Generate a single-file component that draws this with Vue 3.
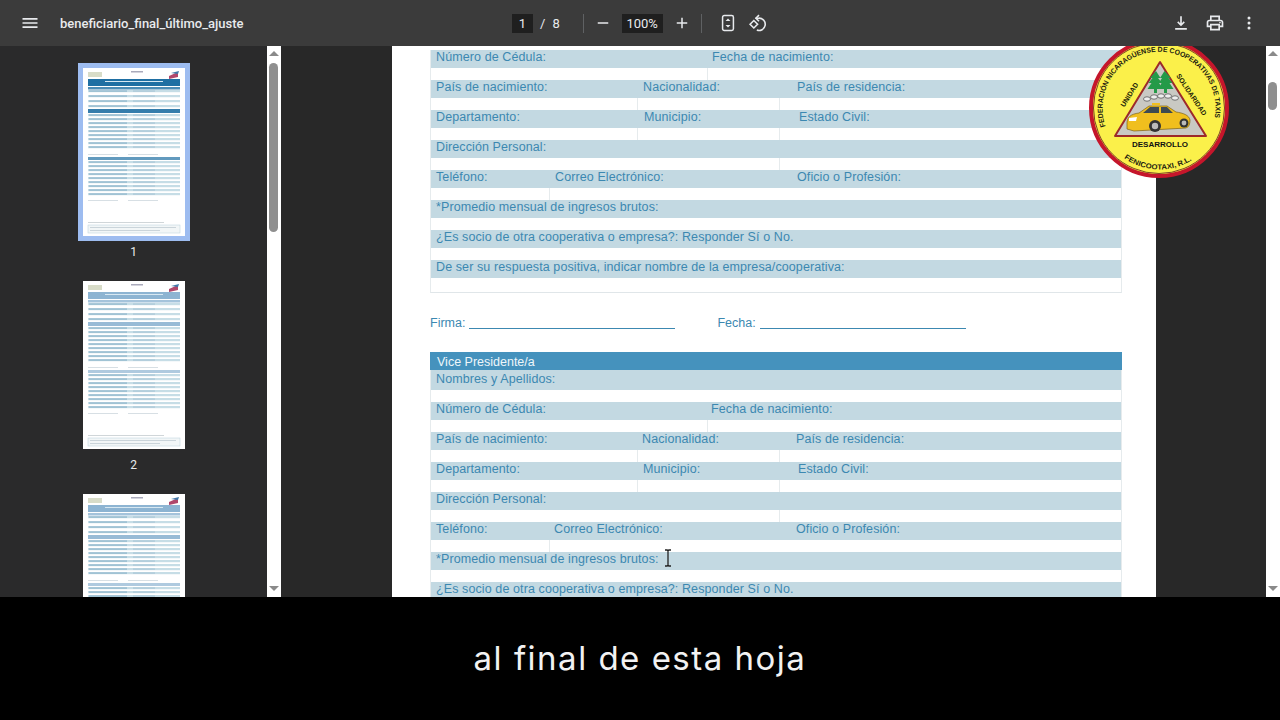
<script setup>
const forms = [
  {
    id: 'presidente',
    rows: [
      { cols: [['Número de Cédula:', 276], ['Fecha de nacimiento:', 300]], cuts: [277] },
      { cols: [['País de nacimiento:', 207], ['Nacionalidad:', 154], ['País de residencia:', 300]], cuts: [207, 142] },
      { cols: [['Departamento:', 208], ['Municipio:', 155], ['Estado Civil:', 300]], cuts: [207, 142] },
      { cols: [['Dirección Personal:', 600]], cuts: [349] },
      { cols: [['Teléfono:', 119], ['Correo Electrónico:', 242], ['Oficio o Profesión:', 300]], cuts: [119] },
      { cols: [['*Promedio mensual de ingresos brutos:', 600]], cuts: [] },
      { cols: [['¿Es socio de otra cooperativa o empresa?: Responder Sí o No.', 600]], cuts: [] },
      { cols: [['De ser su respuesta positiva, indicar nombre de la empresa/cooperativa:', 680]], cuts: [], last: true }
    ]
  },
  {
    id: 'vice',
    title: 'Vice Presidente/a',
    rows: [
      { cols: [['Nombres y Apellidos:', 600]], cuts: [], first: true },
      { cols: [['Número de Cédula:', 275], ['Fecha de nacimiento:', 300]], cuts: [277] },
      { cols: [['País de nacimiento:', 206], ['Nacionalidad:', 154], ['País de residencia:', 300]], cuts: [207, 142] },
      { cols: [['Departamento:', 207], ['Municipio:', 155], ['Estado Civil:', 300]], cuts: [207, 142] },
      { cols: [['Dirección Personal:', 600]], cuts: [349] },
      { cols: [['Teléfono:', 118], ['Correo Electrónico:', 242], ['Oficio o Profesión:', 300]], cuts: [119] },
      { cols: [['*Promedio mensual de ingresos brutos:', 600]], cuts: [] },
      { cols: [['¿Es socio de otra cooperativa o empresa?: Responder Sí o No.', 600]], cuts: [] }
    ]
  }
]

const thumbs = [
  { n: 1, selected: true, head: '#1f6fa3' },
  { n: 2, head: '#8db4d2' },
  { n: 3, head: '#8db4d2' }
]

// y positions of the tiny rows in a thumbnail, in 102x168 page units
const rowsA = [22, 27, 32, 37]
const rowsB = [46, 50, 54, 58, 62, 66, 70, 74, 78]
const rowsC = [93, 97, 101, 105, 109, 113, 117, 121, 125]
const thumbRows = [...rowsA, ...rowsB, ...rowsC]
</script>

<template>
  <div class="viewer">
    <header class="topbar">
      <div class="left">
        <svg class="ico menu" viewBox="0 0 24 24"><path d="M3 18h18v-2H3zM3 13h18v-2H3zM3 6v2h18V6z" /></svg>
        <span class="filename">beneficiario_final_último_ajuste</span>
      </div>
      <div class="center">
        <span class="page-num">1</span>
        <span class="page-total">/</span>
        <span class="page-total">8</span>
        <span class="sep sep-a"></span>
        <svg class="ico small" viewBox="0 0 24 24"><path d="M5 11h14v2H5z" /></svg>
        <span class="zoom-val">100%</span>
        <svg class="ico small" viewBox="0 0 24 24"><path d="M19 13h-6v6h-2v-6H5v-2h6V5h2v6h6z" /></svg>
        <span class="sep sep-b"></span>
        <svg class="ico" viewBox="0 0 24 24">
          <rect x="5.5" y="3" width="13" height="18" rx="2" fill="none" stroke="currentColor" stroke-width="1.8" />
          <path d="M12 6.5l3 3.2H9zM12 17.5l-3-3.2h6z" />
        </svg>
        <svg class="ico rotate" viewBox="0 0 24 24">
          <path d="M2.5 13.5L7 9l4.5 4.5L7 18z" fill="none" stroke="currentColor" stroke-width="1.9" />
          <path d="M9 6.2h4.2a7.4 7.4 0 1 1-2.6 14.3" fill="none" stroke="currentColor" stroke-width="1.9" />
          <path d="M13.2 2.5L9.5 6.2l3.7 3.7" fill="none" stroke="currentColor" stroke-width="1.9" />
        </svg>
      </div>
      <div class="right">
        <svg class="ico" viewBox="0 0 24 24"><path d="M12 16l-4.6-4.6L8.8 10l2.2 2.2V4h2v8.200l2.200-2.200 1.400 1.400zM5 20v-2h14v2z" /></svg>
        <svg class="ico" viewBox="0 0 24 24"><path d="M19 8h-1V3H6v5H5c-1.660 0-3 1.340-3 3v6h4v4h12v-4h4v-6c0-1.660-1.340-3-3-3zM8 5h8v3H8zm8 14H8v-4h8zm2-4v-2H6v2H4v-4c0-.55.45-1 1-1h14c.55 0 1 .45 1 1v4z" /><circle cx="18" cy="11.500" r="1" /></svg>
        <svg class="ico" viewBox="0 0 24 24"><circle cx="12" cy="6" r="1.800" /><circle cx="12" cy="12" r="1.800" /><circle cx="12" cy="18" r="1.800" /></svg>
      </div>
    </header>

    <div class="body">
      <aside class="sidebar">
        <div v-for="t in thumbs" :key="t.n" class="thumb-item">
          <svg class="thumb" :class="{ selected: t.selected }" viewBox="0 0 102 168">
            <rect width="102" height="168" fill="#fff" />
            <rect x="5" y="4" width="14" height="5" fill="#d8dcc8" />
            <rect x="48" y="3" width="12" height="1.500" fill="#aab" />
            <path d="M86 8l9-4v5l-9 2z" fill="#b0476b" />
            <path d="M88 5l8-2-1 3z" fill="#3f77a8" />
            <rect x="5" y="11" width="92" height="7" :fill="t.head" />
            <rect x="22" y="13" width="58" height="1" fill="#d7e8f2" />
            <rect x="5" y="19" width="92" height="2.500" :fill="t.head" opacity=".8" />
            <rect x="5" y="41" width="92" height="4" :fill="t.head" opacity=".9" />
            <rect x="5" y="89" width="92" height="3" :fill="t.head" opacity=".7" />
            <template v-for="y in thumbRows" :key="y">
              <rect x="5" :y="y" width="92" height="2.200" fill="#c6dde6" />
              <rect x="6" :y="y + 0.6" width="38" height="0.900" fill="#7aa9c2" />
              <rect x="50" :y="y + 0.6" width="22" height="0.900" fill="#9fc0d2" />
            </template>
            <rect x="5" y="86" width="30" height=".8" fill="#cdd8de" />
            <rect x="45" y="86" width="30" height=".8" fill="#cdd8de" />
            <rect x="5" y="132" width="30" height=".8" fill="#cdd8de" />
            <rect x="45" y="132" width="30" height=".8" fill="#cdd8de" />
            <rect x="5" y="154" width="76" height=".8" fill="#c5ccd0" />
            <rect x="5" y="157" width="92" height="8" fill="#f2f6f7" stroke="#b9d0da" stroke-width=".5" />
            <rect x="7" y="159" width="86" height=".8" fill="#c0ccd3" />
            <rect x="7" y="162" width="70" height=".8" fill="#c0ccd3" />
          </svg>
          <span class="thumb-label">{{ t.n }}</span>
        </div>
      </aside>
      <div class="scrollbar side-scroll">
        <span class="arrow up"></span>
        <span class="bar"></span>
        <span class="arrow down"></span>
      </div>

      <main class="stage">
        <article class="page">
          <section v-for="f in forms" :key="f.id" class="form">
            <div v-if="f.title" class="form-title">{{ f.title }}</div>
            <div v-for="(r, i) in f.rows" :key="i" class="row" :class="{ first: r.first, last: r.last }">
              <div class="labels">
                <span v-for="c in r.cols" :key="c[0]" class="label" :style="{ width: c[1] + 'px' }">{{ c[0] }}</span>
              </div>
              <div class="blanks">
                <span v-for="(w, j) in r.cuts" :key="j" class="cut" :style="{ width: w + 'px' }"></span>
              </div>
            </div>
            <div v-if="!f.title" class="sign">
              <span>Firma:</span><i class="line"></i>
              <span class="sign-date">Fecha:</span><i class="line"></i>
            </div>
          </section>
        </article>
        <svg class="cursor" viewBox="0 0 10 18">
          <path d="M2 1h2.200L5 2l.8-1H8M5 2v14M2 17h2.200L5 16l.8 1H8" fill="none" stroke="#222" stroke-width="1.300" />
        </svg>
      </main>

      <div class="scrollbar main-scroll">
        <span class="arrow up"></span>
        <span class="bar"></span>
        <span class="arrow down"></span>
      </div>

      <svg class="logo" viewBox="0 0 140 140">
        <defs>
          <path id="logo-top" d="M16.500 88.500A56.500 56.500 0 1 1 125.800 79" />
          <path id="logo-bottom" d="M35 120A61 61 0 0 0 106 120" />
        </defs>
        <circle cx="70" cy="70" r="68" fill="#fbf04a" stroke="#c5162b" stroke-width="4" />
        <circle cx="70" cy="70" r="65.500" fill="none" stroke="#5c1a1a" stroke-width=".8" />
        <text class="logo-ring">
          <textPath href="#logo-top" textLength="205" lengthAdjust="spacingAndGlyphs">FEDERACIÓN NICARAGÜENSE DE COOPERATIVAS DE TAXIS</textPath>
        </text>
        <text class="logo-ring">
          <textPath href="#logo-bottom" textLength="72" lengthAdjust="spacingAndGlyphs">FENICOOTAXI, R.L.</textPath>
        </text>
        <path d="M71 24L26 98h91z" fill="#c9c9c3" stroke="#9c2a2a" stroke-width="2" stroke-linejoin="round" />
        <path d="M67 33l-6 7h2.500l-4 5h3l-4 6h6.500v4h3v-4h6l-4-6h3l-4-5h2.500z" fill="#249a48" />
        <path d="M75.500 33l-4.500 7h2l-3 5h2.500l-3 6h5.500v4h3v-4h6.500l-4-6h3l-4-5h2.500z" fill="#249a48" />
        <g fill="#eee" stroke="#555" stroke-width=".8">
          <ellipse cx="58" cy="61" rx="3.500" ry="2.200" />
          <ellipse cx="65" cy="59" rx="3.500" ry="2.200" />
          <ellipse cx="72" cy="58" rx="3.500" ry="2.200" />
          <ellipse cx="79" cy="58" rx="3.500" ry="2.200" />
          <ellipse cx="86" cy="60" rx="3.500" ry="2.200" />
        </g>
        <path d="M38 85c0-6 4-9 12-10l10-7h18l9 6c7 1 13 3 14 8 0 4-1 7-4 8l-52 3-7-2z" fill="#f0bf1e" stroke="#7d6214" stroke-width=".7" />
        <path d="M61 69h9v6H54zM72 69h6l6 6H72z" fill="#3e4a52" />
        <rect x="63" y="65" width="8" height="2.500" fill="#f0bf1e" />
        <path d="M40 80l8-1-1 4-7 0z" fill="#fff" />
        <circle cx="66" cy="88" r="6" fill="#333" /><circle cx="66" cy="88" r="3.200" fill="#bbb" />
        <circle cx="95" cy="85" r="4.500" fill="#333" /><circle cx="95" cy="85" r="2.400" fill="#bbb" />
        <text class="logo-bold" transform="translate(42.500 58) rotate(-58)" text-anchor="middle">UNIDAD</text>
        <text class="logo-bold" transform="translate(100.500 58) rotate(56)" text-anchor="middle">SOLIDARIDAD</text>
        <text class="logo-desarrollo" x="71" y="109" text-anchor="middle">DESARROLLO</text>
      </svg>
    </div>

    <footer class="caption">al final de esta hoja</footer>
  </div>
</template>

<style scoped>
.viewer {
  width: 1280px;
  height: 720px;
  display: flex;
  flex-direction: column;
  overflow: hidden;
  background: #000;
  font-family: "Liberation Sans", Arial, sans-serif;
}

.topbar {
  height: 46px;
  flex: none;
  display: flex;
  align-items: center;
  background: #3b3b3b;
  color: #e8eaed;
  font-family: Roboto, sans-serif;
}

.ico {
  width: 20px;
  height: 20px;
  fill: currentColor;
  flex: none;
}

.small {
  width: 18px;
  height: 18px;
}

.left {
  width: 512px;
  display: flex;
  align-items: center;
  padding-left: 20px;
  box-sizing: border-box;
}

.filename {
  margin-left: 20px;
  font-size: 13px;
  font-weight: 500;
}

.center {
  display: flex;
  align-items: center;
  font-size: 13px;
}

.page-num {
  width: 21px;
  height: 19px;
  background: #1f1f1f;
  text-align: center;
  line-height: 19px;
}

.page-total {
  margin-left: 7px;
}

.sep {
  width: 1px;
  height: 19px;
  background: #5f6163;
}

.sep-a {
  margin: 0 10px 0 23px;
}

.sep-b {
  margin: 0 16px 0 10px;
}

.zoom-val {
  width: 41px;
  height: 19px;
  margin: 0 10px;
  background: #1f1f1f;
  text-align: center;
  line-height: 19px;
}

.rotate {
  margin-left: 10px;
}

.right {
  margin-left: auto;
  display: flex;
  align-items: center;
  gap: 14px;
  padding-right: 21px;
}

.body {
  position: relative;
  height: 551px;
  flex: none;
  display: flex;
  background: #282828;
  overflow: hidden;
}

.sidebar {
  width: 267px;
  flex: none;
  padding-top: 22px;
  box-sizing: border-box;
  background: #2a2a2b;
}

.thumb-item {
  height: 213px;
  display: flex;
  flex-direction: column;
  align-items: center;
}

.thumb {
  width: 102px;
  height: 168px;
  flex: none;
  display: block;
  filter: blur(.35px);
}

.thumb.selected {
  box-shadow: 0 0 0 5px #9dbcf0;
}

.thumb-label {
  margin-top: 9px;
  color: #e8eaed;
  font-family: Roboto, sans-serif;
  font-size: 12px;
}

.scrollbar {
  width: 14px;
  flex: none;
  position: relative;
  display: flex;
  flex-direction: column;
  background: #fff;
}

.arrow {
  width: 0;
  height: 0;
  margin: 0 auto;
  border-left: 5px solid transparent;
  border-right: 5px solid transparent;
}

.arrow.up {
  margin-top: 5px;
  border-bottom: 5px solid #8a8a8a;
}

.arrow.down {
  margin-top: auto;
  margin-bottom: 6px;
  border-top: 5px solid #8a8a8a;
}

.bar {
  width: 9px;
  margin: 7px auto 0 2px;
  border-radius: 5px;
  background: #8f8f8f;
}

.side-scroll .bar {
  height: 169px;
}

.main-scroll .bar {
  height: 28px;
  margin-top: 26px;
}

.stage {
  position: relative;
  flex: 1;
  min-width: 0;
  padding-left: 111px;
}

.page {
  width: 764px;
  height: 100%;
  padding: 4px 34px 0 38px;
  box-sizing: border-box;
  overflow: hidden;
  background: #fff;
  color: #3c88b1;
  font-size: 12.5px;
}

.form {
  width: 692px;
}

.form-title {
  height: 18px;
  padding-left: 7px;
  background: #4592bd;
  color: #eef6fa;
  line-height: 20px;
}

.row {
  height: 30px;
  border-left: 1px solid #e6ebed;
  border-right: 1px solid #e6ebed;
  box-sizing: border-box;
}

.row.first {
  height: 32px;
}

.row.first .labels {
  height: 20px;
  padding-top: 2px;
}

.row.last {
  height: 33px;
  border-bottom: 1px solid #e0e6e9;
}

.labels {
  height: 18px;
  display: flex;
  padding-left: 5px;
  box-sizing: border-box;
  background: #c3d9e2;
  line-height: 14px;
}

.label {
  flex: none;
  white-space: nowrap;
  letter-spacing: .1px;
}

.blanks {
  height: 12px;
  display: flex;
}

.cut {
  flex: none;
  box-sizing: border-box;
  border-right: 1px solid #e6ebed;
}

.sign {
  height: 16px;
  margin: 22px 0 21px;
  display: flex;
  align-items: center;
  line-height: 16px;
}

.sign-date {
  margin-left: 42px;
}

.line {
  width: 206px;
  height: 11px;
  margin-left: 4px;
  border-bottom: 1px solid #3c88b1;
}

.cursor {
  position: absolute;
  left: 382px;
  top: 503px;
  width: 10px;
  height: 18px;
}

.logo {
  position: absolute;
  left: 1089px;
  top: -8px;
  width: 140px;
  height: 140px;
}

.logo-ring {
  font-size: 7.200px;
  font-weight: 700;
  fill: #1c1c10;
}

.logo-bold {
  font-size: 7px;
  font-weight: 700;
  fill: #211c08;
}

.logo-desarrollo {
  font-size: 8px;
  font-weight: 700;
  fill: #111;
}

.caption {
  flex: 1;
  padding-top: 39px;
  box-sizing: border-box;
  background: #000;
  color: #f2f2f2;
  font-family: Inter, sans-serif;
  font-size: 33px;
  line-height: 44px;
  letter-spacing: 1.500px;
  text-align: center;
}
</style>
